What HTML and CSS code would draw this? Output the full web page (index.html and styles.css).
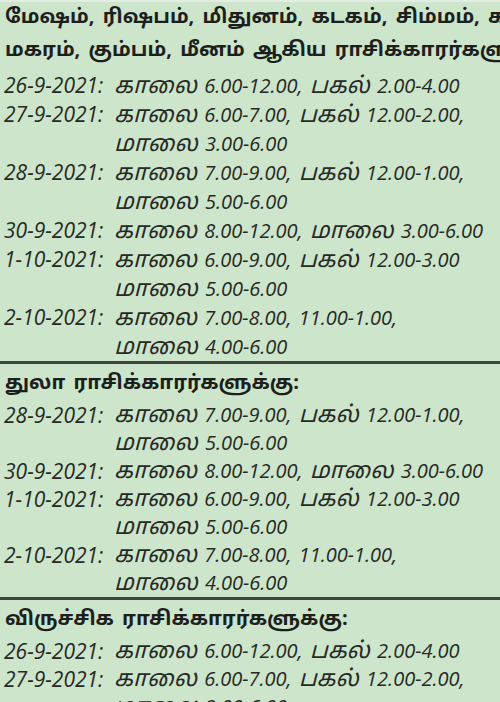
FILE: index.html
```html
<!DOCTYPE html>
<html lang="ta">
<head>
<meta charset="utf-8">
<link rel="stylesheet" href="styles.css">
</head>
<body>
<div class="page">
  <section class="block first">
    <h2 class="head">மேஷம், ரிஷபம், மிதுனம், கடகம், சிம்மம், கன்னி,</h2>
    <h2 class="head">மகரம், கும்பம், மீனம் ஆகிய ராசிக்காரர்களுக்கு:</h2>
    <div class="sched">
      <div class="date">26-9-2021:</div><div class="times"><p><span class="ta">காலை</span> 6.00-12.00, <span class="ta">பகல்</span> 2.00-4.00</p></div>
      <div class="date">27-9-2021:</div><div class="times"><p><span class="ta">காலை</span> 6.00-7.00, <span class="ta">பகல்</span> 12.00-2.00,</p><p><span class="ta">மாலை</span> 3.00-6.00</p></div>
      <div class="date">28-9-2021:</div><div class="times"><p><span class="ta">காலை</span> 7.00-9.00, <span class="ta">பகல்</span> 12.00-1.00,</p><p><span class="ta">மாலை</span> 5.00-6.00</p></div>
      <div class="date">30-9-2021:</div><div class="times"><p><span class="ta">காலை</span> 8.00-12.00, <span class="ta">மாலை</span> 3.00-6.00</p></div>
      <div class="date">1-10-2021:</div><div class="times"><p><span class="ta">காலை</span> 6.00-9.00, <span class="ta">பகல்</span> 12.00-3.00</p><p><span class="ta">மாலை</span> 5.00-6.00</p></div>
      <div class="date">2-10-2021:</div><div class="times"><p><span class="ta">காலை</span> 7.00-8.00, 11.00-1.00,</p><p><span class="ta">மாலை</span> 4.00-6.00</p></div>
    </div>
  </section>
  <section class="block">
    <h2 class="head">துலா ராசிக்காரர்களுக்கு:</h2>
    <div class="sched">
      <div class="date">28-9-2021:</div><div class="times"><p><span class="ta">காலை</span> 7.00-9.00, <span class="ta">பகல்</span> 12.00-1.00,</p><p><span class="ta">மாலை</span> 5.00-6.00</p></div>
      <div class="date">30-9-2021:</div><div class="times"><p><span class="ta">காலை</span> 8.00-12.00, <span class="ta">மாலை</span> 3.00-6.00</p></div>
      <div class="date">1-10-2021:</div><div class="times"><p><span class="ta">காலை</span> 6.00-9.00, <span class="ta">பகல்</span> 12.00-3.00</p><p><span class="ta">மாலை</span> 5.00-6.00</p></div>
      <div class="date">2-10-2021:</div><div class="times"><p><span class="ta">காலை</span> 7.00-8.00, 11.00-1.00,</p><p><span class="ta">மாலை</span> 4.00-6.00</p></div>
    </div>
  </section>
  <section class="block">
    <h2 class="head">விருச்சிக ராசிக்காரர்களுக்கு:</h2>
    <div class="sched">
      <div class="date">26-9-2021:</div><div class="times"><p><span class="ta">காலை</span> 6.00-12.00, <span class="ta">பகல்</span> 2.00-4.00</p></div>
      <div class="date">27-9-2021:</div><div class="times"><p><span class="ta">காலை</span> 6.00-7.00, <span class="ta">பகல்</span> 12.00-2.00,</p><p><span class="ta">மாலை</span> 3.00-6.00</p></div>
    </div>
  </section>
</div>
</body>
</html>
```

FILE: styles.css
```css
html, body {
  margin: 0;
  padding: 0;
}
body {
  background: #cde5cb;
  width: 500px;
  height: 702px;
  overflow: hidden;
}
.page {
  border-top: 2px solid #e4ede3;
  color: #262a26;
}
.block {
  padding: 4px 0 0 0;
}
.block + .block {
  border-top: 3px solid #3d463d;
}
.first {
  padding-top: 0;
}
.head {
  margin: 0;
  padding-left: 5px;
  font-family: "Noto Sans Tamil", "Lohit Tamil", "Noto Sans", sans-serif;
  font-weight: 700;
  font-size: 20px;
  line-height: 33px;
  height: 33px;
  white-space: nowrap;
  overflow: hidden;
  word-spacing: 3px;
  color: #1c1f1c;
}
.first .head:last-of-type {
  margin-bottom: 3px;
}
.sched {
  --row: 28px;
  display: grid;
  grid-template-columns: 114px 1fr;
  font-family: "Open Sans", "Noto Sans Tamil", sans-serif;
  font-style: italic;
  line-height: var(--row);
  white-space: nowrap;
}
.first .sched {
  --row: 29px;
}
.times {
  font-size: 20px;
  letter-spacing: 0;
  word-spacing: 2px;
}
.ta {
  font-family: "Noto Sans Tamil", sans-serif;
  font-size: 23px;
  letter-spacing: 0;
  line-height: 1;
}
.date {
  padding-left: 4px;
  font-size: 21px;
  font-stretch: 88%;
  height: var(--row);
}
.times p {
  margin: 0;
  height: var(--row);
}
```
